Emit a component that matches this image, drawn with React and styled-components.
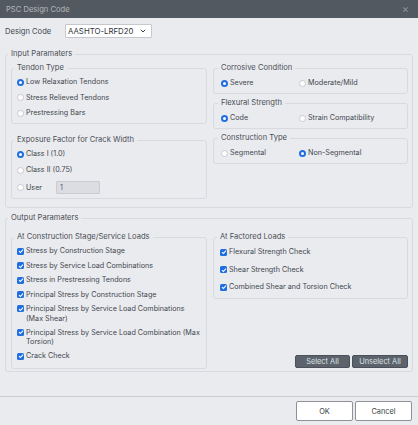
import React from 'react';
import styled, { createGlobalStyle } from 'styled-components';

const GlobalStyle = createGlobalStyle`
    html, body {
        margin: 0;
        padding: 0;
        background: #eaebef;
    }
    * {
        box-sizing: border-box;
    }
`;

const Window = styled.div`
    width: 418px;
    height: 425px;
    display: flex;
    flex-direction: column;
    background: #eaebef;
    font-family: Inter, "Liberation Sans", sans-serif;
    font-size: 7.2px;
    color: #42474e;
    overflow: hidden;
`;

const TitleBar = styled.div`
    height: 18px;
    flex: none;
    display: flex;
    align-items: center;
    justify-content: space-between;
    padding: 0 9px 0 6px;
    background: #525961;
    color: #b3b7bd;
    font-size: 7.6px;
`;

const CloseGlyph = styled.span`
    color: #8c9299;
    font-size: 11px;
    line-height: 1;
`;

const Body = styled.div`
    flex: 1;
    padding: 6px 5px 0 5px;
`;

const CodeRow = styled.div`
    display: flex;
    align-items: center;
    height: 14px;
    margin-bottom: 11px;
`;

const CodeLabel = styled.span`
    width: 60px;
    font-size: 7.6px;
`;

const Select = styled.div`
    width: 87px;
    height: 14px;
    display: flex;
    align-items: center;
    justify-content: space-between;
    padding: 0 5px 0 2px;
    background: #ffffff;
    border: 1px solid #c6c8cd;
    border-radius: 1px;
    font-size: 7.8px;
    color: #30353b;
`;

const Group = styled.fieldset`
    margin: ${p => p.$mt || 0}px 0 0 0;
    padding: ${p => p.$pt || 4}px ${p => p.$pr || 5}px ${p => p.$pb || 5}px ${p => p.$pl || 5}px;
    border: 1px solid #d9dadf;
    border-radius: 3px;
    min-width: 0;
`;

const Legend = styled.legend`
    padding: 0 3px;
    margin-left: -3px;
    line-height: 10px;
    font-size: 7.6px;
    color: #4a4f56;
`;

const Columns = styled.div`
    display: grid;
    grid-template-columns: 196px 195px;
    column-gap: 6px;
`;

const Stack = styled.div`
    display: flex;
    flex-direction: column;
    gap: ${p => p.$gap || 0}px;
`;

const OptionList = styled.div`
    display: flex;
    flex-direction: column;
    gap: ${p => p.$gap || 5.5}px;
`;

const OptionPair = styled.div`
    display: grid;
    grid-template-columns: 78px 1fr;
    height: 10px;
    align-items: center;
`;

const Option = styled.label`
    display: flex;
    align-items: ${p => (p.$wrap ? 'flex-start' : 'center')};
    min-height: 10px;
    line-height: 9.5px;
    white-space: ${p => (p.$wrap ? 'normal' : 'nowrap')};
`;

const RadioDot = styled.span`
    flex: none;
    width: 7px;
    height: 7px;
    margin-right: 2px;
    border-radius: 50%;
    background: #ffffff;
    border: ${p => (p.$on ? '2px solid #1f6fe0' : '1px solid #c8cacf')};
`;

const CheckBox = styled.span`
    flex: none;
    width: 7px;
    height: 7px;
    margin: ${p => (p.$wrap ? '1px' : '0')} 2px 0 0;
    border-radius: 1.5px;
    background: #1f6fe0;
    display: flex;
    align-items: center;
    justify-content: center;
`;

const UserRow = styled.div`
    display: flex;
    align-items: center;
    height: 13px;
`;

const UserLabel = styled.span`
    width: 30px;
`;

const ValueBox = styled.div`
    width: 44px;
    height: 13px;
    padding: 0 3px;
    display: flex;
    align-items: center;
    background: #dcdde2;
    border: 1px solid #c9cbd0;
    border-radius: 1px;
    color: #5b6067;
`;

const RightColumn = styled.div`
    display: flex;
    flex-direction: column;
    justify-content: space-between;
`;

const ButtonRow = styled.div`
    display: flex;
    justify-content: flex-end;
    gap: ${p => p.$gap || 2}px;
    margin-bottom: ${p => p.$mb || 0}px;
`;

const DarkButton = styled.button`
    width: ${p => p.$w}px;
    height: 13px;
    padding: 0;
    background: #5c636c;
    border: 1px solid #4b5159;
    border-radius: 2px;
    color: #dfe2e5;
    font-family: inherit;
    font-size: 7.4px;
`;

const Footer = styled.div`
    flex: none;
    height: 29px;
    border-top: 1px solid #c9cbd0;
    padding: 4px 6px 0 0;
`;

const PlainButton = styled.button`
    width: 57px;
    height: 20px;
    padding: 0;
    background: #ffffff;
    border: 1px solid #8e9298;
    border-radius: 2px;
    color: #3a3f45;
    font-family: inherit;
    font-size: 7.4px;
`;

function Tick() {
    return (
        <svg width="6" height="6" viewBox="0 0 6 6">
            <path d="M1 3.1 L2.4 4.5 L5 1.6" fill="none" stroke="#ffffff" strokeWidth="1.1" />
        </svg>
    );
}

function Chevron() {
    return (
        <svg width="6" height="4" viewBox="0 0 6 4">
            <path d="M0.8 0.8 L3 3 L5.2 0.8" fill="none" stroke="#3a3f45" strokeWidth="1" />
        </svg>
    );
}

function Radio({ on, children }) {
    return (
        <Option>
            <RadioDot $on={on} />
            {children}
        </Option>
    );
}

function Check({ wrap, children }) {
    return (
        <Option $wrap={wrap}>
            <CheckBox $wrap={wrap}>
                <Tick />
            </CheckBox>
            <span>{children}</span>
        </Option>
    );
}

const stageChecks = [
    ['Stress by Construction Stage'],
    ['Stress by Service Load Combinations'],
    ['Stress in Prestressing Tendons'],
    ['Principal Stress by Construction Stage'],
    ['Principal Stress by Service Load Combinations (Max Shear)', true],
    ['Principal Stress by Service Load Combination (Max Torsion)', true],
    ['Crack Check'],
];

const factoredChecks = [
    'Flexural Strength Check',
    'Shear Strength Check',
    'Combined Shear and Torsion Check',
];

export default function App() {
    return (
        <Window>
            <GlobalStyle />
            <TitleBar>
                <span>PSC Design Code</span>
                <CloseGlyph>×</CloseGlyph>
            </TitleBar>
            <Body>
                <CodeRow>
                    <CodeLabel>Design Code</CodeLabel>
                    <Select>
                        <span>AASHTO-LRFD20</span>
                        <Chevron />
                    </Select>
                </CodeRow>

                <Group $pt={4} $pb={8}>
                    <Legend>Input Paramaters</Legend>
                    <Columns>
                        <Stack $gap={11}>
                            <Group $pt={4}>
                                <Legend>Tendon Type</Legend>
                                <OptionList $gap={5.5}>
                                    <Radio on>Low Relaxation Tendons</Radio>
                                    <Radio>Stress Relieved Tendons</Radio>
                                    <Radio>Prestressing Bars</Radio>
                                </OptionList>
                            </Group>
                            <Group $pb={4}>
                                <Legend>Exposure Factor for Crack Width</Legend>
                                <OptionList $gap={6}>
                                    <Radio on>Class I (1.0)</Radio>
                                    <Radio>Class II (0.75)</Radio>
                                    <UserRow>
                                        <RadioDot />
                                        <UserLabel>User</UserLabel>
                                        <ValueBox>1</ValueBox>
                                    </UserRow>
                                </OptionList>
                            </Group>
                        </Stack>
                        <Stack $gap={4}>
                            <Group $pt={5} $pl={7}>
                                <Legend>Corrosive Condition</Legend>
                                <OptionPair>
                                    <Radio on>Severe</Radio>
                                    <Radio>Moderate/Mild</Radio>
                                </OptionPair>
                            </Group>
                            <Group $pt={5} $pl={7}>
                                <Legend>Flexural Strength</Legend>
                                <OptionPair>
                                    <Radio on>Code</Radio>
                                    <Radio>Strain Compatibility</Radio>
                                </OptionPair>
                            </Group>
                            <Group $pt={5} $pl={7}>
                                <Legend>Construction Type</Legend>
                                <OptionPair>
                                    <Radio>Segmental</Radio>
                                    <Radio on>Non-Segmental</Radio>
                                </OptionPair>
                            </Group>
                        </Stack>
                    </Columns>
                </Group>

                <Group $mt={5} $pt={9} $pb={2}>
                    <Legend>Output Paramaters</Legend>
                    <Columns>
                        <Group $pt={4} $pb={7}>
                            <Legend>At Construction Stage/Service Loads</Legend>
                            <OptionList $gap={4.5}>
                                {stageChecks.map(([text, wrap]) => (
                                    <Check key={text} wrap={wrap}>{text}</Check>
                                ))}
                            </OptionList>
                        </Group>
                        <RightColumn>
                            <Group $pt={5} $pl={6} $pb={6}>
                                <Legend>At Factored Loads</Legend>
                                <OptionList $gap={7.5}>
                                    {factoredChecks.map(text => (
                                        <Check key={text}>{text}</Check>
                                    ))}
                                </OptionList>
                            </Group>
                            <ButtonRow $mb={1}>
                                <DarkButton $w={55}>Select All</DarkButton>
                                <DarkButton $w={56}>Unselect All</DarkButton>
                            </ButtonRow>
                        </RightColumn>
                    </Columns>
                </Group>
            </Body>
            <Footer>
                <ButtonRow>
                    <PlainButton>OK</PlainButton>
                    <PlainButton>Cancel</PlainButton>
                </ButtonRow>
            </Footer>
        </Window>
    );
}
